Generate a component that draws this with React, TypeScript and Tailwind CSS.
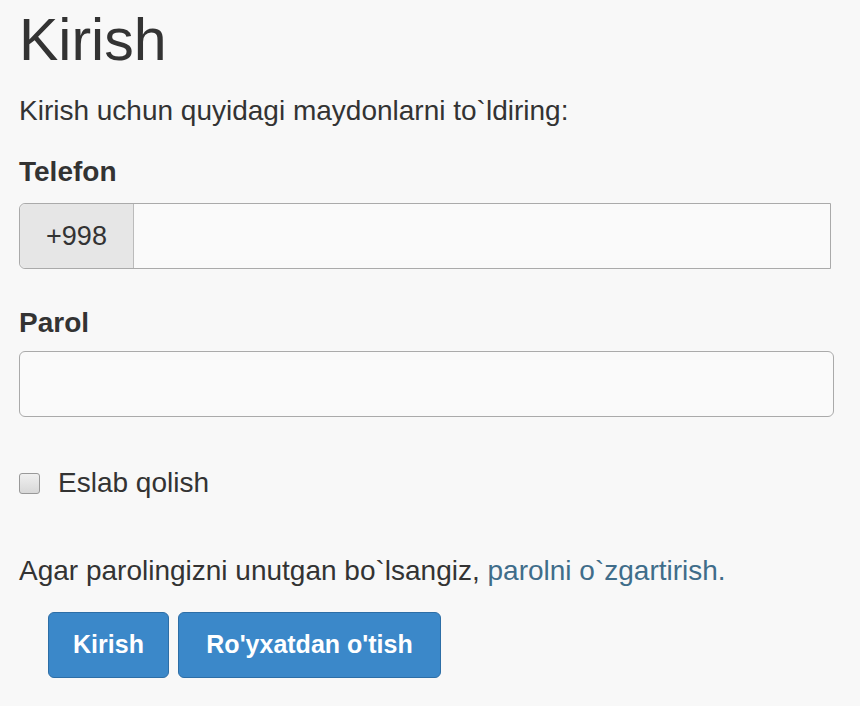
export default function App() {
  return (
    <div className="min-h-[706px] w-[860px] bg-[#f8f8f8] pl-[19px] pr-[27px] pt-[6px] font-['Liberation_Sans',Arial,sans-serif] text-[#333]">
      <h1 className="text-[59px] leading-[68px] font-normal">Kirish</h1>
      <p className="mt-[17px] text-[28px] leading-[40px]">
        Kirish uchun quyidagi maydonlarni to`ldiring:
      </p>

      <label className="mt-[22px] block text-[28px] font-bold leading-[38px]">Telefon</label>
      <div className="mt-[12px] flex h-[66px] w-[812px] rounded-l-[6px] border border-[#aaa]">
        <span className="flex w-[114px] items-center justify-center rounded-l-[6px] border-r border-[#bbb] bg-[#e6e6e6] text-[27px]">
          +998
        </span>
        <input className="flex-1 bg-[#fafafa] px-4 text-[27px] outline-none" />
      </div>

      <label className="mt-[35px] block text-[28px] font-bold leading-[38px]">Parol</label>
      <input
        type="password"
        className="mt-[9px] block h-[66px] w-[815px] rounded-[6px] border border-[#aaa] bg-[#fafafa] px-4 text-[27px] outline-none"
      />

      <label className="mt-[47px] flex items-center gap-[18px] text-[28px] leading-[38px]">
        <span className="h-[21px] w-[21px] rounded-[3px] border border-[#999] bg-gradient-to-b from-[#f0f0f0] to-[#d8d8d8]" />
        Eslab qolish
      </label>

      <p className="mt-[50px] text-[28px] leading-[38px]">
        Agar parolingizni unutgan bo`lsangiz,{" "}
        <a href="#" className="text-[#3f6d8a]">
          parolni o`zgartirish.
        </a>
      </p>

      <div className="mt-[22px] flex gap-[9px] pl-[29px]">
        <button className="h-[66px] w-[121px] rounded-[6px] border border-[#2d6ea6] bg-[#3b88c9] text-[25px] font-bold text-white">
          Kirish
        </button>
        <button className="h-[66px] w-[263px] rounded-[6px] border border-[#2d6ea6] bg-[#3b88c9] text-[25px] font-bold text-white">
          Ro'yxatdan o'tish
        </button>
      </div>
    </div>
  );
}
